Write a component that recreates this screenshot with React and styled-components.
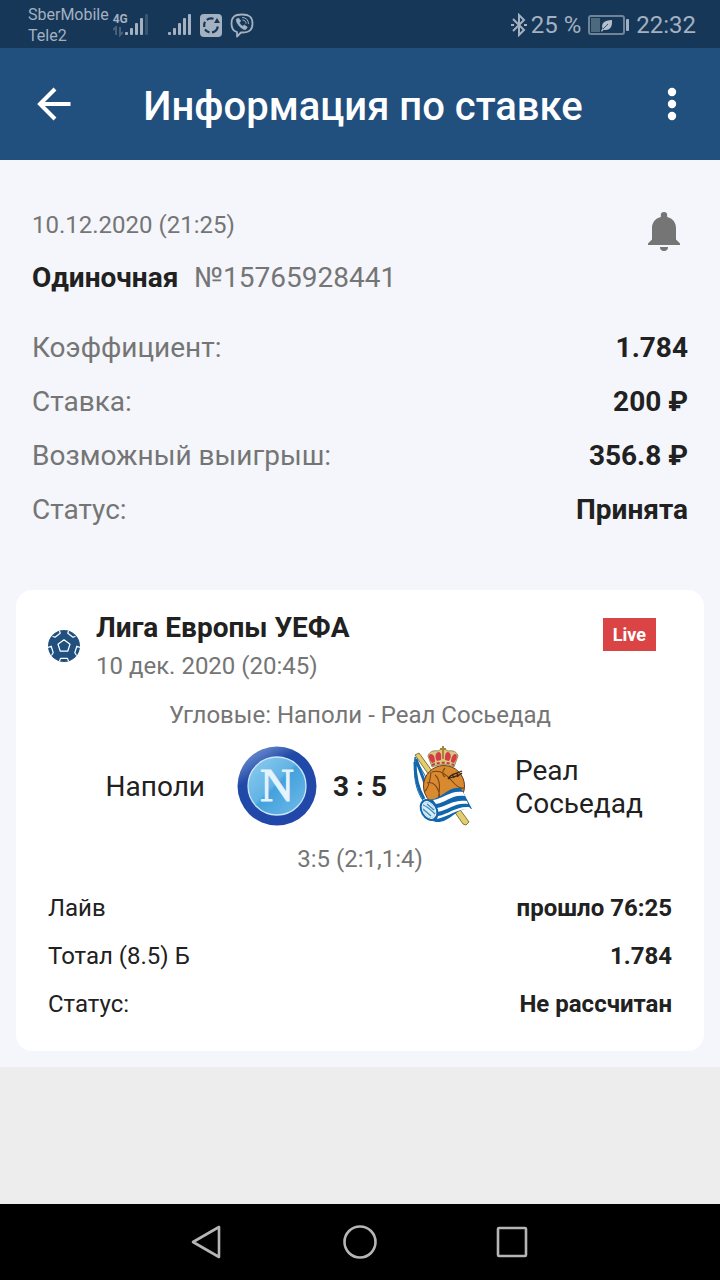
import React from "react";
import styled, { createGlobalStyle } from "styled-components";

const GlobalStyle = createGlobalStyle`
  * { box-sizing: border-box; }
  body {
    margin: 0;
    font-family: Roboto, "Liberation Sans", sans-serif;
    color: #212121;
    background: #ededed;
  }
  h1, h2, p, dl, dt, dd { margin: 0; font-weight: 400; }
`;

const Page = styled.div`
  display: flex;
  flex-direction: column;
  min-height: 100vh;
`;

const StatusBar = styled.div`
  display: flex;
  align-items: center;
  justify-content: space-between;
  height: 48px;
  padding: 2px 24px 0 28px;
  background: #163758;
  color: #a3b1c0;
  svg { display: block; }
`;

const StatusGroup = styled.div`
  display: flex;
  align-items: center;
  gap: ${(p) => p.$gap}px;
`;

const Carriers = styled.div`
  font-size: 16px;
  line-height: 21px;
`;

const StatusText = styled.span`
  font-size: 24px;
  line-height: 32px;
`;

const NetworkSignal = styled.div`
  display: flex;
  align-items: flex-end;
`;

const NetworkType = styled.div`
  display: flex;
  flex-direction: column;
  width: 12px;
  font-size: 12px;
  line-height: 14px;
  font-weight: 700;
  white-space: nowrap;
`;

const Header = styled.header`
  display: flex;
  align-items: center;
  justify-content: space-between;
  height: 112px;
  padding: 0 24px 0 30px;
  background: #21507f;
  color: #fff;
`;

const Title = styled.h1`
  padding-top: 5px;
  font-size: 40px;
  line-height: 48px;
  font-weight: 500;
`;

const IconButton = styled.button`
  display: flex;
  align-items: center;
  justify-content: center;
  width: 48px;
  height: 48px;
  padding: 0;
  border: 0;
  background: none;
  color: inherit;
`;

const Content = styled.main`
  padding: 48px 16px 16px;
  background: #f4f6fb;
`;

const Summary = styled.section`
  padding: 0 16px;
`;

const SummaryTop = styled.div`
  display: flex;
  justify-content: space-between;
  align-items: flex-start;
  color: #757575;
`;

const BetDate = styled.p`
  font-size: 24px;
  line-height: 34px;
`;

const BetKind = styled.p`
  display: flex;
  gap: 16px;
  margin-top: 20px;
  font-size: 28px;
  line-height: 32px;
`;

const Strong = styled.strong`
  font-weight: 700;
  color: #212121;
`;

const Facts = styled.dl`
  margin-top: 27px;
  font-size: 28px;
`;

const Fact = styled.div`
  display: flex;
  justify-content: space-between;
  line-height: 54px;
  dt { color: #757575; }
  dd { font-weight: 700; }
`;

const Card = styled.section`
  margin-top: 53px;
  padding: 20px 32px 23px;
  border-radius: 16px;
  background: #fff;
`;

const League = styled.div`
  display: flex;
  align-items: center;
  gap: 16px;
  padding-right: 16px;
  svg { display: block; }
`;

const BallSlot = styled.div`
  padding-bottom: 4px;
`;

const LeagueText = styled.div`
  flex: 1;
`;

const LeagueName = styled.h2`
  font-size: 28px;
  line-height: 36px;
  font-weight: 700;
`;

const LeagueDate = styled.p`
  font-size: 24px;
  line-height: 40px;
  color: #757575;
`;

const LiveTag = styled.span`
  align-self: flex-start;
  margin-top: 8px;
  padding: 1px 10px 0;
  background: #db4445;
  color: #fff;
  font-size: 18px;
  line-height: 32px;
  font-weight: 700;
`;

const Caption = styled.p`
  margin-top: ${(p) => p.$top}px;
  font-size: 24px;
  line-height: 32px;
  text-align: center;
  color: #757575;
`;

const Match = styled.div`
  display: grid;
  grid-template-columns: 1fr 80px auto 80px 1fr;
  align-items: center;
  margin-top: 15px;
  font-size: 28px;
  line-height: 33px;
  svg { display: block; }
`;

const Team = styled.div`
  text-align: ${(p) => p.$align};
  padding: 1px ${(p) => (p.$align === "right" ? 32 : 0)}px 0 ${(p) => (p.$align === "left" ? 32 : 0)}px;
`;

const Score = styled.strong`
  padding: 1px 16px 0;
  font-weight: 700;
`;

const Details = styled.dl`
  margin-top: 9px;
  font-size: 24px;
`;

const Detail = styled.div`
  display: flex;
  justify-content: space-between;
  line-height: 48px;
  dd { font-weight: 700; }
`;

const Filler = styled.div`
  flex: 1;
`;

const NavBar = styled.nav`
  display: flex;
  justify-content: center;
  align-items: center;
  gap: 104px;
  height: 76px;
  background: #000;
  color: #b5b5b5;
`;

const SignalBars = ({ weak }) => (
  <svg width="24" height="26" viewBox="12 0 24 26" fill="currentColor">
    <rect x="12" y="20" width="3" height="3" rx="1" />
    <rect x="17" y="16" width="3" height="7" rx="1" />
    <rect x="22" y="11" width="3" height="12" rx="1" />
    <rect x="27" y="6" width="3" height="17" rx="1" />
    <rect x="32" y="2" width="3" height="21" rx="1" opacity={weak ? 0.25 : 1} />
  </svg>
);

const DataArrows = () => (
  <svg width="10" height="12" viewBox="0 0 10 12" fill="none" stroke="currentColor" strokeWidth="2" opacity=".35">
    <path d="M3 9V1L0 4M7 1v8l3-3" />
  </svg>
);

const SyncIcon = () => (
  <svg width="22" height="23" viewBox="0 0 22 23">
    <rect width="22" height="23" rx="4" fill="#a3b1c0" />
    <path d="M13.500 4.800A7 7 0 0 0 6.800 5.800M5 7.700A7 7 0 0 0 4.300 13M5 15.300A7 7 0 0 0 9.500 18.400M12 18.400A7 7 0 0 0 17.800 12.500" fill="none" stroke="#163758" strokeWidth="2.200" />
    <path d="M14 9h6l-3-5z" fill="#163758" />
  </svg>
);

const ViberIcon = () => (
  <svg width="24" height="25" viewBox="0 0 24 25" fill="none" stroke="currentColor" strokeWidth="1.8" strokeLinecap="round" strokeLinejoin="round">
    <path d="M12 1.5c7.5 0 10.5 2.5 10.500 9s-3 9-10.500 9h-1L7 23.500v-4.500C3 18 1.500 15.500 1.500 10.500c0-6.500 3-9 10.500-9z" />
    <path d="M6.500 6.200l2-1.200 2.300 3-1.300 1.500c.5 1.700 1.700 3 3.300 3.700l1.500-1.300 3 2.200-1.300 2.200c-1 .8-3.500-.4-5.500-2.100C8.300 12.200 5.500 8.200 6.500 6.200z" fill="currentColor" strokeWidth=".6" />
    <path d="M12.500 4.500c3.500.2 5.800 2.300 6 6M12.800 7c2 .2 3.200 1.400 3.300 3.300" strokeWidth="1" />
  </svg>
);

const BluetoothIcon = () => (
  <svg width="16" height="24" viewBox="0 0 16 24" fill="none" stroke="currentColor" strokeWidth="2">
    <path d="M2 6l11 11-5 5V2l5 5L2 18" />
    <path d="M0 12h3M13 12h3" />
  </svg>
);

const BatteryIcon = () => (
  <svg width="41" height="20" viewBox="0 0 41 20">
    <rect x="1" y="1" width="35" height="18" rx="2" fill="none" stroke="#6f8496" strokeWidth="2" />
    <rect x="3" y="3" width="9" height="14" fill="#4d697e" />
    <rect x="38" y="4" width="3" height="12" rx="1" fill="#a3b1c0" />
    <path d="M24 5c-8 0-11 4-9.500 8.500L13 16l1 .8 1.500-2C22 16 24.500 12 24 5z" fill="#b3bfca" />
    <path d="M15 14l5-5" stroke="#163758" strokeWidth=".8" />
  </svg>
);

const BackArrow = () => (
  <svg width="36" height="36" viewBox="0 0 36 36" fill="none" stroke="currentColor" strokeWidth="4">
    <path d="M34.500 18H5M19 3L4 18l15 15" />
  </svg>
);

const MoreIcon = () => (
  <svg width="12" height="34" viewBox="0 0 12 34" fill="currentColor">
    <circle cx="6" cy="5" r="4.200" />
    <circle cx="6" cy="17" r="4.200" />
    <circle cx="6" cy="29" r="4.200" />
  </svg>
);

const BellIcon = () => (
  <svg width="32" height="40" viewBox="0 0 32 40" fill="#757575">
    <path d="M12.800 5V3.200a3.200 3.200 0 0 1 6.400 0V5C25 6.500 28 10.800 28 16v11.500l4 4V33H0v-1.500l4-4V16C4 10.800 7 6.500 12.800 5z" />
    <path d="M12 35h8a4 4 0 0 1-8 0z" />
  </svg>
);

const BallIcon = () => (
  <svg width="32" height="32" viewBox="0 0 32 32">
    <circle cx="16" cy="16" r="16" fill="#21507f" />
    <g fill="none" stroke="#fff" strokeWidth="1.200" strokeLinejoin="round">
      <path d="M16 9.800l6 4.400-2.300 7h-7.400l-2.300-7z" />
      <path d="M11.500 1l.7 2.200-5.200 4-2.500-1M20.500 1l-.7 2.200 5.200 4 2.500-1" />
      <path d="M0 17.500l3.200-1.300 2 6.500-1.800 2.800M32 17.500l-3.200-1.300-2 6.500 1.800 2.800" />
      <path d="M11.500 31.200l1-2.800h7l1 2.800" />
    </g>
  </svg>
);

const NapoliCrest = () => (
  <svg width="80" height="80" viewBox="0 0 80 80">
    <defs>
      <linearGradient id="napoliRing" x1="0" y1="0" x2=".6" y2="1">
        <stop offset="0" stopColor="#2b4eb0" />
        <stop offset=".18" stopColor="#5b7fc6" />
        <stop offset=".38" stopColor="#2149a8" />
        <stop offset="1" stopColor="#2148a9" />
      </linearGradient>
      <linearGradient id="napoliField" x1="0" y1="0" x2="1" y2="1">
        <stop offset="0" stopColor="#91cdef" />
        <stop offset=".45" stopColor="#62b3e5" />
        <stop offset=".5" stopColor="#43a1dc" />
        <stop offset="1" stopColor="#72bdea" />
      </linearGradient>
    </defs>
    <circle cx="40" cy="40" r="39.500" fill="url(#napoliRing)" />
    <circle cx="40" cy="40" r="29" fill="url(#napoliField)" stroke="#c9e7f8" strokeWidth="1.300" />
    <text x="40" y="55" textAnchor="middle" fontFamily="Liberation Serif, serif" fontSize="47" fill="#e5f4fc" stroke="#e5f4fc" strokeWidth="1">N</text>
  </svg>
);

const SociedadCrest = () => (
  <svg width="80" height="80" viewBox="0 0 80 80">
    <path d="M12 9l4-2 50 69-3 3-3-1z" fill="#e1ce70" stroke="#867434" strokeWidth="1" />
    <path d="M12 11c5 12 15 22 17 41l-8 4C12 44 10 28 12 11z" fill="#fff" stroke="#1267ac" strokeWidth="1" />
    <path d="M12 16c0 15 3 27 9 37M13 13c4 13 10 22 12 38" fill="none" stroke="#1267ac" strokeWidth="3" />
    <circle cx="41" cy="40" r="20.500" fill="#d98a2f" stroke="#633b20" strokeWidth="1" />
    <path d="M28 26c-1 11-4 18-7 20M29 26c8-3 15 3 20 9s8 8 12 7M32 29c7 6 4 18 3 26M24 37c6-2 12 3 13 16M42 22c-3 3-3 7 0 9" fill="none" stroke="#794519" strokeWidth="1.100" />
    <path d="M45 33c2-5 8-5 14-8M45 33c5-3 10-2 14-6M49 28l2 4M54 27l1 4" fill="none" stroke="#3c271b" strokeWidth="1.300" />
    <path d="M29 21l-4-11c1-4 5-6 10-5l5-3 5 3c5-1 9 1 10 5l-4 11c-7-3-15-3-22 0z" fill="#d8c884" stroke="#857444" strokeWidth=".8" />
    <path d="M29 17c-4-5-4-9-1-9 3 0 4 4 4 8zM34 15c-3-5-1-9 2-9 3 1 2 5 2 8zM42 14c0-4 0-8 3-8 3 1 4 5 1 9zM48 16c0-4 2-8 4-8 3 0 2 5-1 9z" fill="#d63b48" />
    <path d="M40 0v13M37 3h6" fill="none" stroke="#a6862f" strokeWidth="2" />
    <path d="M29 19c7-3 15-3 22 0" fill="none" stroke="#c03c3c" strokeWidth="2" strokeDasharray="3 2" />
    <path d="M22 53c15 4 22-14 36-11l11 21c-16-3-21 14-36 13-8-2-15-10-11-23z" fill="#1267ac" />
    <path d="M30 54c11-2 18-10 30-8l2 4c-13-2-18 6-29 8zM34 62c10-2 17-9 30-7l1 3c-13-2-19 6-31 8zM35 70c11-2 18-10 31-9l2 2c-14-1-21 7-34 10z" fill="#fff" />
    <ellipse cx="26" cy="64" rx="7" ry="10" transform="rotate(-30 26 64)" fill="#d9edf7" stroke="#1267ac" strokeWidth="3" />
    <ellipse cx="26" cy="64" rx="6" ry="9" transform="rotate(-30 26 64)" fill="none" stroke="#fff" strokeWidth="1" />
    <path d="M20 59c3 1 8 5 12 9M20 63l8 7M24 58l7 6" fill="none" stroke="#348bbd" strokeWidth="1.300" />
  </svg>
);

const NavIcon = ({ children }) => (
  <svg width="36" height="36" viewBox="0 0 36 36" fill="none" stroke="currentColor" strokeWidth="2.600" strokeLinejoin="round">
    {children}
  </svg>
);

const facts = [
  ["Коэффициент:", "1.784"],
  ["Ставка:", "200 ₽"],
  ["Возможный выигрыш:", "356.8 ₽"],
  ["Статус:", "Принята"],
];

const details = [
  ["Лайв", "прошло 76:25"],
  ["Тотал (8.5) Б", "1.784"],
  ["Статус:", "Не рассчитан"],
];

export default function App() {
  return (
    <Page>
      <GlobalStyle />
      <StatusBar>
        <StatusGroup $gap={4}>
          <Carriers>
            <div>SberMobile</div>
            <div>Tele2</div>
          </Carriers>
          <StatusGroup $gap={8}>
            <StatusGroup $gap={19}>
              <NetworkSignal>
                <NetworkType>
                  4G
                  <DataArrows />
                </NetworkType>
                <SignalBars weak />
              </NetworkSignal>
              <SignalBars />
            </StatusGroup>
            <SyncIcon />
            <ViberIcon />
          </StatusGroup>
        </StatusGroup>
        <StatusGroup $gap={7}>
          <StatusGroup $gap={4}>
            <BluetoothIcon />
            <StatusText>25 %</StatusText>
          </StatusGroup>
          <BatteryIcon />
          <StatusText>22:32</StatusText>
        </StatusGroup>
      </StatusBar>

      <Header>
        <IconButton aria-label="Назад"><BackArrow /></IconButton>
        <Title>Информация по ставке</Title>
        <IconButton aria-label="Меню"><MoreIcon /></IconButton>
      </Header>

      <Content>
        <Summary>
          <SummaryTop>
            <div>
              <BetDate>10.12.2020 (21:25)</BetDate>
              <BetKind>
                <Strong>Одиночная</Strong>
                <span>№15765928441</span>
              </BetKind>
            </div>
            <IconButton aria-label="Уведомления"><BellIcon /></IconButton>
          </SummaryTop>
          <Facts>
            {facts.map(([label, value]) => (
              <Fact key={label}>
                <dt>{label}</dt>
                <dd>{value}</dd>
              </Fact>
            ))}
          </Facts>
        </Summary>

        <Card>
          <League>
            <BallSlot><BallIcon /></BallSlot>
            <LeagueText>
              <LeagueName>Лига Европы УЕФА</LeagueName>
              <LeagueDate>10 дек. 2020 (20:45)</LeagueDate>
            </LeagueText>
            <LiveTag>Live</LiveTag>
          </League>
          <Caption $top={13}>Угловые: Наполи - Реал Сосьедад</Caption>
          <Match>
            <Team $align="right">Наполи</Team>
            <NapoliCrest />
            <Score>3 : 5</Score>
            <SociedadCrest />
            <Team $align="left">Реал Сосьедад</Team>
          </Match>
          <Caption $top={17}>3:5 (2:1,1:4)</Caption>
          <Details>
            {details.map(([label, value]) => (
              <Detail key={label}>
                <dt>{label}</dt>
                <dd>{value}</dd>
              </Detail>
            ))}
          </Details>
        </Card>
      </Content>

      <Filler />

      <NavBar>
        <IconButton aria-label="Назад">
          <NavIcon><path d="M29 3v30L3 18z" /></NavIcon>
        </IconButton>
        <IconButton aria-label="Домой">
          <NavIcon><circle cx="18" cy="18" r="15.500" /></NavIcon>
        </IconButton>
        <IconButton aria-label="Недавние">
          <NavIcon><rect x="4" y="4" width="28" height="28" rx="1" /></NavIcon>
        </IconButton>
      </NavBar>
    </Page>
  );
}
